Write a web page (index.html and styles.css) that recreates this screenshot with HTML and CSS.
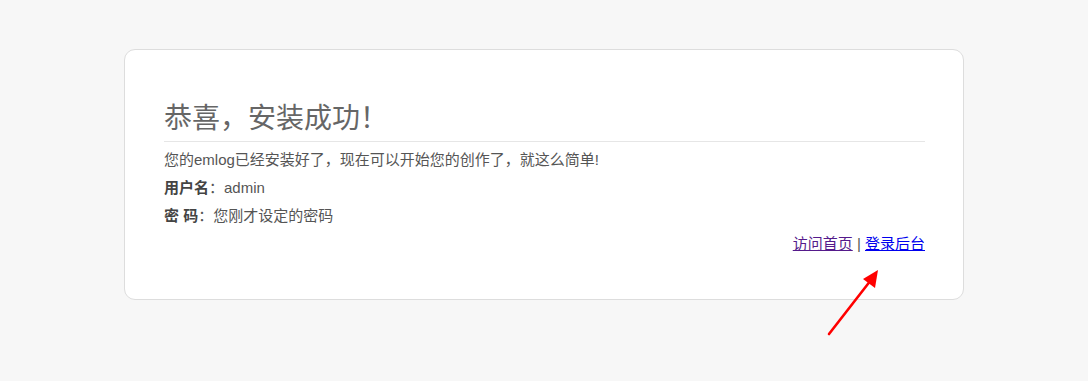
FILE: index.html
```html
<!DOCTYPE html>
<html lang="zh-CN">
<head>
<meta charset="utf-8">
<title>emlog</title>
<link rel="stylesheet" href="styles.css">
</head>
<body>
<div class="main">
  <h1 class="title">恭喜，安装成功！</h1>
  <p class="line">您的emlog已经安装好了，现在可以开始您的创作了，就这么简单!</p>
  <p class="line"><b>用户名</b>：admin</p>
  <p class="line"><b>密 码</b>：您刚才设定的密码</p>
  <p class="links"><a href="#" class="visited">访问首页</a> | <a href="#">登录后台</a></p>
</div>
<svg class="arrow" width="70" height="80" viewBox="0 0 70 80" xmlns="http://www.w3.org/2000/svg">
  <line x1="10" y1="70" x2="52" y2="16" stroke="#ff0000" stroke-width="2.6" stroke-linecap="round"/>
  <polygon points="59,6 56,24 44,15" fill="#ff0000"/>
</svg>
</body>
</html>
```
FILE: styles.css
```css
html, body {
  margin: 0;
  padding: 0;
}
body {
  background: #f7f7f7;
  font-family: "Liberation Sans", "Noto Sans CJK SC", sans-serif;
  font-size: 15px;
  color: #555;
  position: relative;
  height: 381px;
}
.main {
  box-sizing: border-box;
  width: 840px;
  margin: 49px auto 0;
  background: #fff;
  border: 1px solid #dddddd;
  border-radius: 11px;
  padding: 48px 38px 32px 39px;
  height: 251px;
}
.title {
  margin: 0 0 4px;
  font-family: "Liberation Serif", "Noto Sans CJK SC", serif;
  font-weight: normal;
  font-size: 28px;
  line-height: 42px;
  color: #666;
  border-bottom: 1px solid #e6e6e6;
  padding-bottom: 1px;
}
.line {
  margin: 0;
  line-height: 28px;
}
.line b {
  color: #444;
}
.links {
  margin: 0;
  line-height: 28px;
  text-align: right;
}
.links a {
  color: #0000ee;
}
.links a.visited {
  color: #551a8b;
}
.arrow {
  position: absolute;
  left: 819px;
  top: 264px;
}
```
